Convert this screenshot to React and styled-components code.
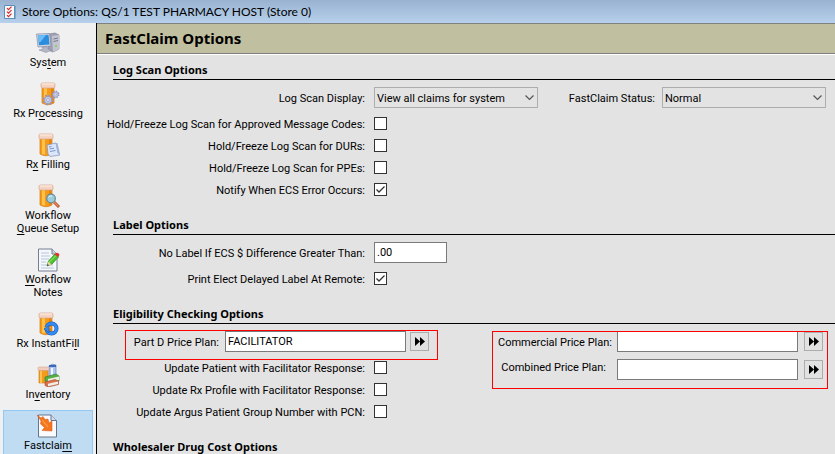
import React from "react";
import styled, { createGlobalStyle } from "styled-components";

const NAV_ITEMS = [
  { id: "system", label: <>Sys<u>t</u>em</>, icon: SystemIcon },
  { id: "processing", label: <>Rx Pr<u>o</u>cessing</>, icon: ProcessingIcon },
  { id: "filling", label: <>R<u>x</u> Filling</>, icon: FillingIcon },
  { id: "queue", label: <>Workflow<br /><u>Q</u>ueue Setup</>, icon: QueueIcon },
  { id: "notes", label: <><u>W</u>orkflow<br />Notes</>, icon: NotesIcon },
  { id: "instantfill", label: <>Rx InstantFi<u>l</u>l</>, icon: InstantFillIcon },
  { id: "inventory", label: <>In<u>v</u>entory</>, icon: InventoryIcon },
  { id: "fastclaim", label: <>Fastclai<u>m</u></>, icon: FastclaimIcon },
];

function App() {
  return (
    <>
      <GlobalStyle />
      <Window>
        <TitleBar>
          <TitleIcon />
          <span>Store Options: QS/1 TEST PHARMACY HOST (Store 0)</span>
        </TitleBar>
        <Main>
          <Sidebar>
            {NAV_ITEMS.map(({ id, label, icon: Icon }) => (
              <NavButton key={id} type="button" $active={id === "fastclaim"}>
                <Icon />
                <span>{label}</span>
              </NavButton>
            ))}
          </Sidebar>
          <Content>
            <PageHeader>
              <h1>FastClaim Options</h1>
            </PageHeader>
            <Form>
              <Section>
                <h2>Log Scan Options</h2>
                <FieldRow>
                  <Label htmlFor="display">Log Scan Display:</Label>
                  <Dropdown id="display" value="View all claims for system" />
                  <RightField>
                    <label htmlFor="status">FastClaim Status:</label>
                    <Dropdown id="status" value="Normal" />
                  </RightField>
                </FieldRow>
                <CheckRow id="codes" label="Hold/Freeze Log Scan for Approved Message Codes:" />
                <CheckRow id="durs" label="Hold/Freeze Log Scan for DURs:" />
                <CheckRow id="ppes" label="Hold/Freeze Log Scan for PPEs:" />
                <CheckRow id="ecs" label="Notify When ECS Error Occurs:" checked />
              </Section>

              <Section>
                <h2>Label Options</h2>
                <FieldRow>
                  <Label htmlFor="difference">No Label If ECS $ Difference Greater Than:</Label>
                  <TextInput id="difference" defaultValue=".00" $width={73} />
                </FieldRow>
                <CheckRow id="remote" label="Print Elect Delayed Label At Remote:" checked />
              </Section>

              <Section>
                <h2>Eligibility Checking Options</h2>
                <FieldRow>
                  <PartDPlan>
                    <label htmlFor="partd">Part D Price Plan:</label>
                    <TextInput id="partd" defaultValue="FACILITATOR" $width={181} />
                    <LookupButton />
                  </PartDPlan>
                  <OtherPlans>
                    <label htmlFor="commercial">Commercial Price Plan:</label>
                    <TextInput id="commercial" $width={181} />
                    <LookupButton />
                    <label htmlFor="combined">Combined Price Plan:</label>
                    <TextInput id="combined" $width={181} />
                    <LookupButton />
                  </OtherPlans>
                </FieldRow>
                <CheckRow id="patient" label="Update Patient with Facilitator Response:" />
                <CheckRow id="profile" label="Update Rx Profile with Facilitator Response:" />
                <CheckRow id="argus" label="Update Argus Patient Group Number with PCN:" />
              </Section>

              <Section>
                <h2>Wholesaler Drug Cost Options</h2>
              </Section>
            </Form>
          </Content>
        </Main>
      </Window>
    </>
  );
}

export default App;

function CheckRow({ id, label, checked }) {
  return (
    <CheckLine>
      <Label htmlFor={id}>{label}</Label>
      <CheckBox>
        <input id={id} type="checkbox" defaultChecked={checked} />
        <svg viewBox="0 0 13 13" width="13" height="13">
          <path d="M2.5 6.5 L5 9 L10.5 3.5" fill="none" stroke="#333" strokeWidth="1.3" />
        </svg>
      </CheckBox>
    </CheckLine>
  );
}

function Dropdown({ id, value }) {
  return (
    <SelectBox>
      <select id={id} defaultValue={value}>
        <option>{value}</option>
      </select>
      <svg viewBox="0 0 9 6" width="9" height="6">
        <path d="M0.5 0.5 L4.5 4.5 L8.5 0.5" fill="none" stroke="#555" strokeWidth="1.2" />
      </svg>
    </SelectBox>
  );
}

function LookupButton() {
  return (
    <IconButton type="button" aria-label="Look up">
      <svg viewBox="0 0 10 9" width="10" height="9">
        <path d="M0 0 L5 4.5 L0 9 Z M5 0 L10 4.5 L5 9 Z" fill="#000" />
      </svg>
    </IconButton>
  );
}

function TitleIcon() {
  return (
    <svg viewBox="0 0 14 16" width="14" height="16">
      <path d="M3 2 H12.5 V15 H3 Z" fill="#4c86b0" />
      <path d="M1.5 1.5 H11.5 V13.5 L10.5 14.5 H1.5 Z" fill="#f6f9fc" stroke="#5b8fb8" />
      <path d="M4 4.2 L5.5 5.7 L8.5 2.7 M4 7.7 L5.5 9.2 L8.5 6.2 M4 11.2 L5.5 12.7 L8.5 9.7" fill="none" stroke="#d42a2a" strokeWidth="1.2" />
    </svg>
  );
}

function SystemIcon() {
  return (
    <svg viewBox="0 0 24 24" width="24" height="24">
      <path d="M13 3 L19 2 L23 4 V18 L17 21 L12 19 Z" fill="#9fa0b2" stroke="#77788f" strokeWidth="0.6" />
      <path d="M16 5 L23 4 V18 L17 21 Z" fill="#c3c4d1" />
      <path d="M17.5 8 L22 7 M17.5 10.5 L22 9.5" stroke="#76788d" />
      <circle cx="20" cy="15" r="1" fill="#7bd14e" />
      <path d="M0.5 3 L13.5 2.5 L15 15 L2 16 Z" fill="#d5d7e2" stroke="#8589a0" strokeWidth="0.7" />
      <path d="M1.8 4.2 L12.5 3.8 L13.6 13.5 L3 14.3 Z" fill="#2b8de0" />
      <path d="M1.8 4.2 L10 4 L4.5 11 L2.6 11.5 Z" fill="#6bbcf7" />
      <path d="M6 16 L11 15.7 L12 18 L16 19 L10 21.5 L3 19 L7 18 Z" fill="#b5b7c6" stroke="#85879b" strokeWidth="0.5" />
    </svg>
  );
}

function Bottle() {
  return (
    <>
      <path d="M4 5 H16 V21 Q10 24.5 4 21 Z" fill="#f49b1c" stroke="#d47d12" strokeWidth="0.7" />
      <path d="M6 6 H9 V21.5 L6 21 Z" fill="#ffc14a" />
      <path d="M13 6 H15.5 V21 L13 21.6 Z" fill="#e98208" />
      <rect x="3" y="1" width="14" height="5" rx="1.5" fill="#f4d3c0" stroke="#d8a58e" strokeWidth="0.7" />
      <path d="M4 2 H16" stroke="#fff0e6" />
    </>
  );
}

function ProcessingIcon() {
  return (
    <svg viewBox="0 0 24 24" width="24" height="24">
      <g transform="translate(2 0)"><Bottle /></g>
      <g fill="#c6cae8" stroke="#8f95c4">
        <circle cx="12" cy="18" r="3.8" fill="none" strokeWidth="3" strokeDasharray="1.6 1.4" />
        <circle cx="12" cy="18" r="3.6" strokeWidth="0.7" />
        <circle cx="19.5" cy="12.5" r="2.7" fill="none" strokeWidth="2.4" strokeDasharray="1.2 0.9" />
        <circle cx="19.5" cy="12.5" r="2.6" strokeWidth="0.6" />
        <circle cx="12" cy="18" r="1.4" fill="#fff" strokeWidth="0.8" />
        <circle cx="19.5" cy="12.5" r="0.9" fill="#fff" strokeWidth="0.6" />
      </g>
    </svg>
  );
}

function FillingIcon() {
  return (
    <svg viewBox="0 0 24 24" width="24" height="24">
      <Bottle />
      <path d="M11 12 L20 10 L22 20 L24 22 L14 23.5 L12 21 Z" fill="#dbe6fa" stroke="#7d91bd" strokeWidth="0.7" />
      <path d="M13 14 L15.5 13.5 M13.5 16 L18 15.2 M14 18.5 L19.5 17.5" stroke="#7c95cf" />
      <path d="M20 10 L22 20 L24 22 V21 L21.5 10 Z" fill="#9fb2d9" />
    </svg>
  );
}

function QueueIcon() {
  return (
    <svg viewBox="0 0 24 24" width="24" height="24">
      <Bottle />
      <path d="M18 18 L23 23" stroke="#a34624" strokeWidth="2.8" />
      <path d="M18 18 L22.5 22.5" stroke="#ef8653" strokeWidth="1.6" />
      <circle cx="15" cy="14.5" r="4.3" fill="#9bcddd" stroke="#6a8c98" strokeWidth="1.3" />
      <path d="M12.5 13.5 Q13.5 11.5 16 12" fill="none" stroke="#e7fbff" />
    </svg>
  );
}

function NotesIcon() {
  return (
    <svg viewBox="0 0 24 24" width="24" height="24">
      <path d="M2.5 1 H16 L21 6 V23 H2.5 Z" fill="#f4f7fc" stroke="#747f91" />
      <path d="M16 1 V6 H21" fill="#cbd4e2" stroke="#747f91" />
      <path d="M5 5 H13 M5 8 H14 M5 11 H13 M5 14 H10 M5 17 H17 M5 20 H18" stroke="#b8c5dc" />
      <path d="M11 18 L12.5 13 L19 6 L22.5 9 L16 16 Z" fill="#4bc32d" stroke="#288b1b" strokeWidth="0.7" />
      <path d="M13 14.5 L20 7.5" stroke="#a2eb72" />
      <path d="M18.5 6.5 L20 5 Q22 4 23.5 6.5 L22.5 9 Z" fill="#dc362d" />
      <path d="M11 18 L12.5 13.5 L15.5 16.5 Z" fill="#efd6a4" />
      <path d="M11 18 L11.6 16 L13 17.3 Z" fill="#333" />
    </svg>
  );
}

function InstantFillIcon() {
  return (
    <svg viewBox="0 0 24 24" width="24" height="24">
      <Bottle />
      <circle cx="15.5" cy="16.5" r="5" fill="none" stroke="#155dc1" strokeWidth="4" />
      <circle cx="15.5" cy="16.5" r="5" fill="none" stroke="#358bf1" strokeWidth="2.8" />
      <path d="M8 15.5 H15" stroke="#f8a827" strokeWidth="1.4" />
      <path d="M8 17 L13 13.5 V20.5 Z" fill="#358bf1" stroke="#155dc1" strokeWidth="0.6" />
    </svg>
  );
}

function InventoryIcon() {
  return (
    <svg viewBox="0 0 24 24" width="24" height="24">
      <path d="M13 3 Q16 0 20 2 V14 H13 Z" fill="#aac5ef" stroke="#6680bd" strokeWidth="0.7" />
      <path d="M13 2 H20 V4 H13 Z" fill="#3d68ba" />
      <path d="M16 5 V14" stroke="#f2f7ff" strokeWidth="2" />
      <path d="M3 7 H12 V20 H3 Z" fill="#f49b1c" stroke="#c9760f" strokeWidth="0.6" />
      <path d="M5 8 V20" stroke="#ffc450" strokeWidth="2" />
      <rect x="2" y="4" width="11" height="3.5" rx="1" fill="#f2cdbb" stroke="#cd9e88" strokeWidth="0.5" />
      <path d="M9 14 L20 11 L23 13 V18 L12 20 L9 18 Z" fill="#57ad46" stroke="#2d782c" strokeWidth="0.6" />
      <path d="M12 16 L23 13.5 V17 L12 19.5 Z" fill="#e9f3df" />
      <path d="M9 19 L19 16.5 L22.5 18 V21.5 L12 24 L9 22.5 Z" fill="#dd724a" stroke="#9f4937" strokeWidth="0.6" />
      <path d="M12 20.7 L22 18.5 V21 L12 23.3 Z" fill="#f1eeeb" />
    </svg>
  );
}

function FastclaimIcon() {
  return (
    <svg viewBox="0 0 24 24" width="24" height="24">
      <path d="M2.5 1 H15 L20.5 6.5 V23 H2.5 Z" fill="#f9fbfe" stroke="#66778d" />
      <path d="M15 1 V6.5 H20.5" fill="#d2dceb" stroke="#66778d" />
      <path d="M1 1 L5 4 L7 2.5 L9 5.5 L12 5 L13 9 L16 7 V17 L6 16.5 L8.5 13.5 L4.5 10 L5 7 Z" fill="#f4761c" stroke="#d95516" strokeWidth="0.5" />
      <path d="M6 6 L12 13" stroke="#f99a45" strokeWidth="1.2" />
    </svg>
  );
}

const GlobalStyle = createGlobalStyle`
  * {
    box-sizing: border-box;
  }

  body {
    margin: 0;
    color: #000;
    font: 11px/13px Tahoma, Roboto, sans-serif;
  }

  input, select, button {
    margin: 0;
    color: inherit;
    font: inherit;
  }

  label {
    padding-top: 2px;
  }

  h1, h2 {
    margin: 0;
    font-family: "Noto Sans", sans-serif;
  }
`;

const Window = styled.div`
  display: flex;
  flex-direction: column;
  height: 100vh;
  overflow: hidden;
`;

const TitleBar = styled.header`
  display: flex;
  flex: none;
  align-items: center;
  gap: 5px;
  height: 23px;
  padding-left: 3px;
  background: linear-gradient(#98b2d0, #b7d1ec);
  font-family: "Segoe UI", Lato, sans-serif;
  font-size: 12px;
  white-space: nowrap;
`;

const Main = styled.div`
  display: flex;
  flex: 1;
  min-height: 0;
`;

const Sidebar = styled.nav`
  display: flex;
  flex: none;
  flex-direction: column;
  width: 97px;
  padding: 4px 3px 0;
  overflow: hidden;
  background: #f0f0f0;
  border-right: 1px solid #000;
`;

const NavButton = styled.button`
  display: flex;
  flex: none;
  flex-direction: column;
  align-items: center;
  gap: 1px;
  padding: 3px 0 8px;
  background: ${(props) => (props.$active ? "#c0dcf3" : "transparent")};
  border: 1px solid ${(props) => (props.$active ? "#90c8f6" : "transparent")};
  white-space: nowrap;

  u {
    text-underline-offset: 2px;
  }
`;

const Content = styled.main`
  flex: 1;
  min-width: 0;
  overflow: hidden;
  background: #e3e3e3;
`;

const PageHeader = styled.div`
  height: 31px;
  padding-left: 8px;
  background: #c0bf9f;
  border-top: 1px solid #808080;
  border-bottom: 1px solid #808080;
  box-shadow: 0 1px #fff;

  h1 {
    font-size: 15px;
    line-height: 29px;
  }
`;

const Form = styled.form`
  padding: 8px 0 0 16px;
`;

const Section = styled.section`
  padding-bottom: 17px;

  h2 {
    height: 18px;
    margin-bottom: 7px;
    border-bottom: 1px solid #000;
    font-size: 11px;
    line-height: 16px;
  }
`;

const FieldRow = styled.div`
  display: flex;
  align-items: center;
  gap: 9px;
  height: 21px;
  margin-bottom: 5px;
  padding-right: 9px;
`;

const CheckLine = styled.div`
  display: flex;
  align-items: center;
  gap: 9px;
  height: 21px;

  & + & {
    margin-top: 1px;
  }
`;

const Label = styled.label`
  display: flex;
  flex: none;
  justify-content: flex-end;
  width: 252px;
  white-space: nowrap;
`;

const RightField = styled.div`
  display: flex;
  align-items: center;
  gap: 7px;
  margin-left: auto;
  white-space: nowrap;
`;

const SelectBox = styled.span`
  position: relative;
  flex: none;
  width: 164px;
  height: 21px;

  select {
    width: 100%;
    height: 100%;
    padding: 1px 20px 0 2px;
    appearance: none;
    background: #e3e3e3;
    border: 1px solid #adadad;
    border-radius: 0;
  }

  svg {
    position: absolute;
    top: 8px;
    right: 4px;
    pointer-events: none;
  }
`;

const CheckBox = styled.span`
  position: relative;
  width: 13px;
  height: 13px;

  input {
    display: block;
    width: 13px;
    height: 13px;
    appearance: none;
    background: #fff;
    border: 1px solid #333;
  }

  svg {
    display: none;
    position: absolute;
    inset: 0;
    pointer-events: none;
  }

  input:checked + svg {
    display: block;
  }
`;

const TextInput = styled.input.attrs({ type: "text" })`
  width: ${(props) => props.$width}px;
  height: 21px;
  padding: 0 2px;
  background: #fff;
  border: 1px solid #7a7a7a;
  border-radius: 0;
`;

const IconButton = styled.button`
  display: flex;
  align-items: center;
  justify-content: center;
  width: 19px;
  height: 19px;
  padding: 0;
  background: #e1e1e1;
  border: 1px solid #adadad;
`;

// red marker frame drawn over a group of fields
const Highlight = styled.div`
  position: relative;
  white-space: nowrap;

  &::after {
    content: "";
    position: absolute;
    border: 1px solid #f00;
    pointer-events: none;
  }
`;

const PartDPlan = styled(Highlight)`
  display: grid;
  grid-template-columns: 108px auto auto;
  align-items: center;
  column-gap: 4px;

  label {
    padding-right: 2px;
    text-align: right;
  }

  &::after {
    inset: -1px -9px -8px 12px;
  }
`;

const OtherPlans = styled(Highlight)`
  display: grid;
  grid-template-columns: 113px auto auto;
  align-items: center;
  align-self: flex-start;
  gap: 7px 6px;
  margin-left: auto;
  margin-right: 3px;

  label {
    padding-right: 5px;
    text-align: right;
  }

  label:last-of-type {
    align-self: start;
  }

  &::after {
    inset: 0 -5px -9px -6px;
  }
`;
